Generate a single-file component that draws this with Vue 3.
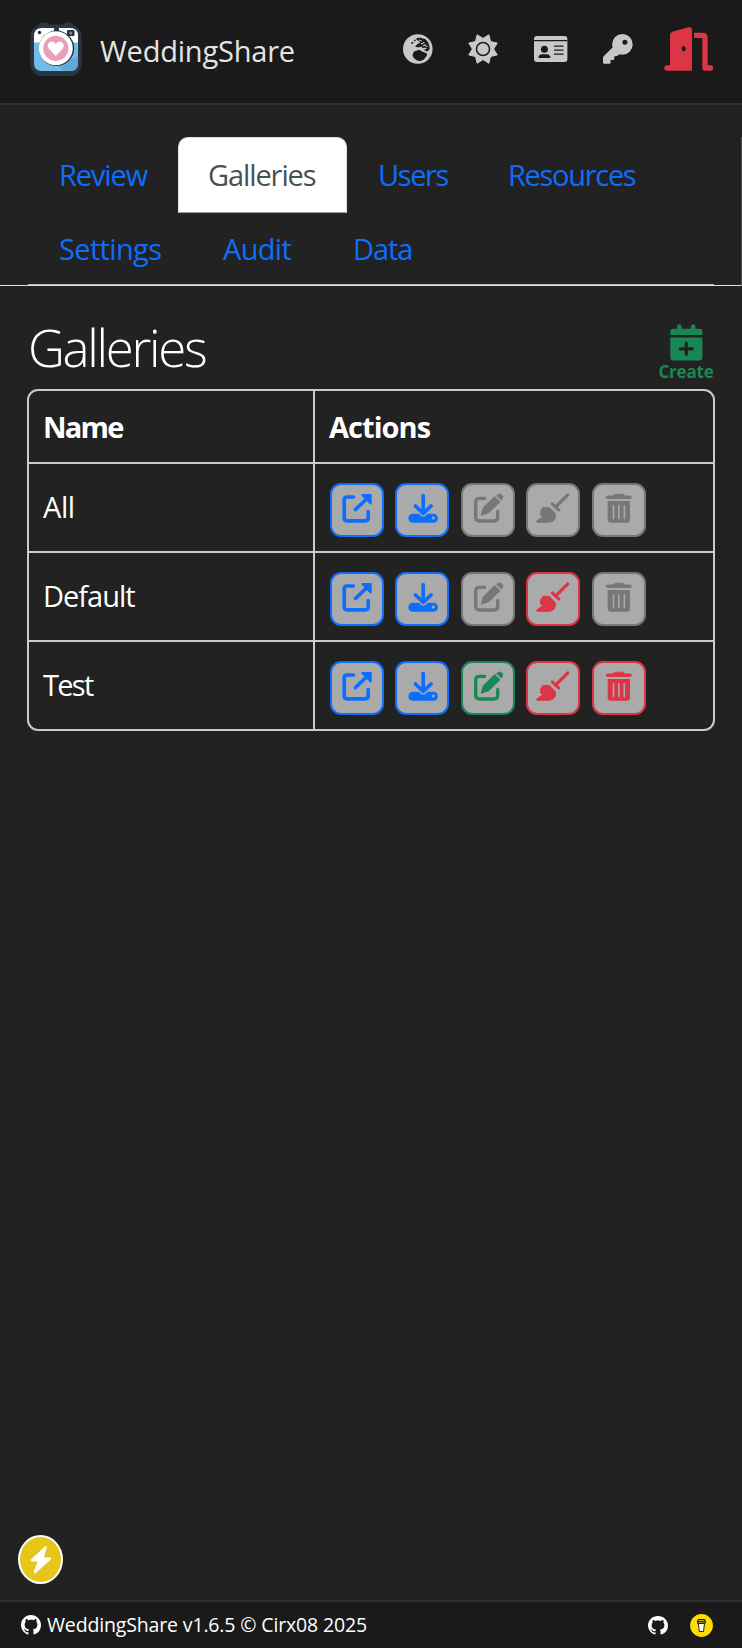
<script setup>
const tabs = [
  { label: 'Review', width: 150 },
  { label: 'Galleries', width: 169, active: true },
  { label: 'Users', width: 130 },
  { label: 'Resources', width: 190 },
  { label: 'Settings', width: 164 },
  { label: 'Audit', width: 130 },
  { label: 'Data', width: 122 }
]

const rows = [
  { name: 'All', actions: ['open blue', 'download blue', 'edit off', 'wipe off', 'remove off'] },
  { name: 'Default', actions: ['open blue', 'download blue', 'edit off', 'wipe red', 'remove off'] },
  { name: 'Test', actions: ['open blue', 'download blue', 'edit green', 'wipe red', 'remove red'] }
]

const github = 'M8 0C3.58 0 0 3.58 0 8c0 3.54 2.29 6.53 5.47 7.59.4.07.55-.17.55-.38 0-.19-.01-.82-.01-1.49-2.01.37-2.53-.49-2.69-.94-.09-.23-.48-.94-.82-1.13-.28-.15-.68-.52-.01-.53.63-.01 1.08.58 1.23.82.72 1.21 1.87.87 2.33.66.07-.52.28-.87.51-1.07-1.78-.2-3.64-.89-3.64-3.95 0-.87.31-1.59.82-2.15-.08-.2-.36-1.02.08-2.12 0 0 .67-.21 2.2.82.64-.18 1.32-.27 2-.27.68 0 1.36.09 2 .27 1.53-1.04 2.2-.82 2.2-.82.44 1.1.16 1.92.08 2.12.51.56.82 1.27.82 2.15 0 3.07-1.87 3.75-3.65 3.95.29.25.54.73.54 1.48 0 1.07-.01 1.93-.01 2.2 0 .21.15.46.55.38A8.013 8.013 0 0016 8c0-4.42-3.58-8-8-8z'

// Alternating outer and inner vertices of the eight-pointed sun
const sun = Array.from({ length: 16 }, (_, i) => {
  const r = i % 2 ? 10.6 : 15.4
  const a = ((i * 22.5 + 22.5) * Math.PI) / 180
  return `${(15 + r * Math.cos(a)).toFixed(2)},${(15 + r * Math.sin(a)).toFixed(2)}`
}).join(' ')
</script>

<template>
  <div class="page">
    <header class="topbar">
      <svg class="logo" width="52" height="55" viewBox="0 0 52 55">
        <rect x="9" y="0.5" width="10" height="8" rx="3" fill="#2b3543" />
        <rect x="34" y="0.5" width="9" height="8" rx="3" fill="#2b3543" />
        <rect x="0.5" y="2.5" width="51" height="51.5" rx="12" fill="#2b3543" />
        <path d="M4 21V14Q4 6 12 6H40Q48 6 48 14V21Z" fill="#fff" />
        <path d="M4 20.500H48V41Q48 49 40 49H12Q4 49 4 41Z" fill="#70bce8" />
        <path d="M40 38Q36 44 29 45L34 49H40Q48 49 48 41V34Z" fill="#5fa9d6" />
        <circle cx="9.500" cy="10.500" r="1.700" fill="#242b38" />
        <rect x="37" y="8" width="7.500" height="6" rx="1" fill="#293342" />
        <circle cx="40.700" cy="11" r="1.500" fill="#7d8795" />
        <path d="M24 9V6.500Q26 4 29 6.500V9Z" fill="#293342" />
        <circle cx="26.500" cy="26.300" r="17.700" fill="#202b3a" />
        <circle cx="25.800" cy="26.300" r="17" fill="#fff" />
        <circle cx="25.800" cy="26.300" r="12.600" fill="#ea9fbd" />
        <path d="M25.800 34L19.500 27.500C14.500 21.500 22 16 25.800 22C29.500 16 37 21.500 32 27.500Z" fill="#fff" />
      </svg>
      <span class="brand">WeddingShare</span>
      <nav class="tools">
        <svg class="globe" width="30" height="30" viewBox="0 0 30 30">
          <circle cx="14.800" cy="15" r="14.800" fill="#c8c8c8" />
          <path d="M9.500 22L10.300 18.500Q12 16.200 14.500 16.600L16.500 15.800L19 17.600L23.500 19.200Q24.800 20.300 23.500 22.300L20.500 25.700Q15 28.500 11.500 24.800Z" fill="#1a1a1a" />
          <path d="M13 5.300L17 3.600L22.500 5.200Q27 9.500 26.500 15.500L24 17.500L20.500 15.700L23.800 15L22.500 13.500L20 14.300L18.200 12.600L15.500 13.500L12 12.600L14.300 10.300L17.500 8.200L15.500 7Z" fill="#1a1a1a" />
          <path d="M18 9.800L21.500 8.500M20 12L23 10.700M23 12.800L24.500 12M16 6L18.500 7" stroke="#c8c8c8" stroke-width="1.300" />
          <path d="M8.300 9.400L10.300 8.300M11.300 6.900L12.500 6M14 5L15 4" stroke="#1a1a1a" stroke-width="1.500" />
        </svg>
        <svg class="sun" width="30" height="30" viewBox="0 0 30 30">
          <polygon :points="sun" fill="#c8c8c8" stroke="#c8c8c8" stroke-width="1" stroke-linejoin="round" />
          <circle cx="15" cy="15" r="6.500" fill="#c8c8c8" stroke="#1a1a1a" stroke-width="1.500" />
        </svg>
        <svg class="card" width="34" height="26" viewBox="0 0 34 26">
          <rect width="33.400" height="26" rx="3" fill="#c8c8c8" />
          <path d="M0 4.700H33.400" stroke="#1a1a1a" stroke-width="1.300" />
          <circle cx="10.400" cy="13.300" r="3.500" fill="#1a1a1a" />
          <path d="M4.300 22Q4.700 18.300 8 18.300H13Q16 18.300 16.500 22Z" fill="#1a1a1a" />
          <path d="M20.500 10.200H29M20.500 14.200H29M20.500 18.200H29" stroke="#1a1a1a" stroke-width="1.300" stroke-linecap="round" />
        </svg>
        <svg class="key" width="30" height="30" viewBox="0 0 30 30">
          <circle cx="19.400" cy="10.400" r="10.300" fill="#c8c8c8" />
          <path d="M10 13L.7 22.200Q0 23 0 24V28.500Q0 29.800 1.300 29.800H6.500Q7.600 29.800 7.600 28.500V26H10.200Q11.300 26 11.300 24.800V22.300H13.500L18 19.500Z" fill="#c8c8c8" />
          <circle cx="21.900" cy="8.300" r="2.500" fill="#1a1a1a" />
        </svg>
        <svg class="door" width="50" height="44" viewBox="0 0 50 44">
          <path d="M6 38.300V8.500Q6 5.300 9 4.500L24.500.3Q28 0 28 3.500V43.700H3Q.3 43.700.3 41Q.3 38.300 3 38.300Z" fill="#dc3545" />
          <path d="M30 8.400H38.700Q41 8.400 41 10.700V41H46.500" fill="none" stroke="#dc3545" stroke-width="5.400" stroke-linejoin="round" />
          <circle cx="46.500" cy="41" r="2.700" fill="#dc3545" />
          <ellipse cx="19.700" cy="21.600" rx="2" ry="2.700" fill="#1a1a1a" />
        </svg>
      </nav>
    </header>

    <div class="tabstrip">
      <nav class="tabs">
        <a v-for="tab in tabs" :key="tab.label" class="tab" :class="[tab.label.toLowerCase(), { active: tab.active }]" :style="{ width: tab.width + 'px' }">{{ tab.label }}</a>
      </nav>
    </div>

    <main class="content">
      <div class="titlebar">
        <h1>Galleries</h1>
        <div class="create">
          <svg width="33" height="37" viewBox="0 0 33 37">
            <path d="M.3 11V8Q.3 4.700 3.500 4.700H29.200Q32.400 4.700 32.400 8V11Z" fill="#198754" />
            <path d="M.3 13.500H32.400V33Q32.400 36.500 29 36.500H3.700Q.3 36.500.3 33Z" fill="#198754" />
            <path d="M9.400 2.400V8M23.200 2.400V8" stroke="#198754" stroke-width="4.400" stroke-linecap="round" />
            <path d="M16.300 19.200V30.300M10.300 24.800H22.200" stroke="#222" stroke-width="3.200" stroke-linecap="round" />
          </svg>
          <span>Create</span>
        </div>
      </div>

      <div class="table">
        <div class="row head">
          <div class="cell name">Name</div>
          <div class="cell acts">Actions</div>
        </div>
        <div v-for="row in rows" :key="row.name" class="row">
          <div class="cell name" :class="row.name.toLowerCase()"><span>{{ row.name }}</span></div>
          <div class="cell actions">
            <button v-for="action in row.actions" :key="action" class="action" :class="action">
              <svg width="54" height="54" viewBox="0 0 54 54" fill="none" stroke="currentColor" stroke-linecap="round" stroke-linejoin="round">
                <g v-if="action.startsWith('open')" stroke-width="3.700">
                  <path d="M23.300 14H17Q14.200 14 14.200 17V34.800Q14.200 37.800 17.200 37.800H35.200Q38.200 37.800 38.200 34.800V28.700M25.500 26.500L37 15.500" />
                  <path d="M32.300 12L40.700 12V20.500Z" fill="currentColor" stroke-width="2" />
                </g>
                <g v-else-if="action.startsWith('download')" stroke-width="3.700">
                  <rect x="13.400" y="30.700" width="29.500" height="9" rx="4.300" fill="currentColor" stroke="none" />
                  <path d="M20.500 23L28.200 30.400L36 23" stroke="#aaa" stroke-width="6.600" />
                  <path d="M28.200 12.500V30M20.500 23L28.200 30.400L36 23" />
                  <circle cx="38.200" cy="35" r="1.500" fill="#aaa" stroke="none" />
                </g>
                <g v-else-if="action.startsWith('edit')" stroke-width="3.300">
                  <path d="M23.700 15.300H18.500Q14.700 15.300 14.700 19V34.300Q14.700 38 18.500 38H33Q36.700 38 36.700 34.300V28.500" />
                  <path d="M20.500 32L22.200 25.300L33.700 14L38.600 18.900L27.500 29.600Z" fill="currentColor" stroke-width="1.200" />
                  <path d="M36 12.300L37.300 11.400Q39.200 10.500 40.600 12Q42.300 13.700 41.300 15.400L40.400 16.700Z" fill="currentColor" stroke-width="1" />
                </g>
                <g v-else-if="action.startsWith('wipe')">
                  <path d="M41.800 11.900L29.800 23.800" stroke-width="3.300" />
                  <path d="M26.300 20.900L32.800 27" stroke-width="3" />
                  <path d="M16.500 25Q20 23.800 23.300 24.600L29.400 30.700Q30.300 39.300 22 39.300H11.200Q10 38.700 11.200 37.600Q15 35.800 17 32.800L14.400 32Q14 27.500 16.500 25Z" fill="currentColor" stroke-width="1" />
                </g>
                <g v-else>
                  <path d="M15.800 14.200H37.900" stroke-width="3.600" />
                  <path d="M21.500 13L23 11.200H30.800L32.300 13Z" fill="currentColor" stroke-width="1" />
                  <path d="M15.700 18H38V36.500Q38 39.800 34.800 39.800H19Q15.700 39.800 15.700 36.500Z" fill="currentColor" stroke="none" />
                  <path d="M21.500 22.800V35.600M26.900 22.800V35.600M32.300 22.800V35.600" stroke="#aaa" stroke-width="1.600" />
                </g>
              </svg>
            </button>
          </div>
        </div>
      </div>
    </main>

    <div class="bolt">
      <svg width="22" height="28" viewBox="0 0 22 28">
        <path d="M15.500 1.500L2 14.200H9.300L5 26L20 12.700H12.300Z" fill="#fff" stroke="#fff" stroke-width="2.400" stroke-linejoin="round" />
      </svg>
    </div>

    <footer class="footer">
      <svg width="20" height="20" viewBox="0 0 16 16"><path :d="github" fill="#fff" /></svg>
      <span class="version">WeddingShare v1.6.5 © Cirx08 2025</span>
      <svg class="repo" width="20" height="19" viewBox="0 0 16 16" preserveAspectRatio="none"><path :d="github" fill="#fff" /></svg>
      <svg class="coffee" width="23" height="23" viewBox="0 0 23 23">
        <circle cx="11.500" cy="11.500" r="11.400" fill="#ffdd00" />
        <path d="M8.300 9.500L9.300 17.500H13.500L14.500 9.500Z" fill="#fff" stroke="#222" stroke-width="1" />
        <path d="M8.500 5.500H14.500L15.300 7.300V9H7.500V7.300Z" fill="#ffdd00" stroke="#222" stroke-width="1.100" />
        <path d="M7.200 7.300H15.700" stroke="#222" stroke-width="1.100" />
      </svg>
    </footer>
  </div>
</template>

<style>
body {
  margin: 0;
  background: #222;
}
</style>

<style scoped>
.page {
  position: relative;
  display: flex;
  flex-direction: column;
  box-sizing: border-box;
  width: 742px;
  height: 1648px;
  overflow: hidden;
  background: #222;
  color: #fff;
  font-family: "Open Sans", "Noto Sans", sans-serif;
  font-size: 29px;
  line-height: 40px;
}
svg {
  display: block;
  flex: none;
}
.topbar {
  display: flex;
  align-items: center;
  box-sizing: border-box;
  height: 105px;
  padding: 0 28px 4px 30px;
  border-bottom: 2px solid #303030;
  background: #1a1a1a;
}
.brand {
  margin-left: 18px;
  padding-top: 3px;
  color: #e4e4e4;
  letter-spacing: -0.2px;
}
.tools {
  display: flex;
  align-items: center;
  margin-left: auto;
  padding-bottom: 2px;
}
.sun {
  margin-left: 35px;
}
.card {
  margin-left: 36px;
}
.key {
  margin-left: 35px;
}
.door {
  margin-left: 31px;
}
.tabstrip {
  box-sizing: border-box;
  height: 149px;
  margin-top: 32px;
  padding: 0 28px;
  border-right: 1px solid #505050;
  border-bottom: 1px solid #dee2e6;
}
.tabs {
  display: flex;
  flex-wrap: wrap;
  align-content: flex-start;
  box-sizing: border-box;
  width: 686px;
  height: 148px;
  border-bottom: 1px solid #b8babe;
}
.tab {
  box-sizing: border-box;
  height: 74px;
  padding-left: 31px;
  line-height: 76px;
  color: #0d6efd;
  letter-spacing: -1.1px;
  white-space: nowrap;
}
.tab.active {
  height: 76px;
  margin-bottom: -2px;
  padding-left: 29px;
  border: 1px solid #dee2e6;
  border-bottom-color: #999;
  border-radius: 10px 10px 0 0;
  background: #fff;
  color: #495057;
  line-height: 74px;
}
.users {
  letter-spacing: -1.4px;
}
.resources {
  letter-spacing: -1.3px;
}
.settings {
  letter-spacing: -0.65px;
}
.audit {
  letter-spacing: -0.7px;
}
.content {
  padding: 0 27px;
}
.titlebar {
  display: flex;
  justify-content: space-between;
  height: 103px;
}
h1 {
  margin: 25px 0 0 1px;
  font-size: 51px;
  font-weight: 300;
  line-height: 72px;
  letter-spacing: -2.3px;
}
.create {
  display: flex;
  flex-direction: column;
  align-items: center;
  width: 56px;
  margin-top: 38px;
  margin-right: 1px;
  color: #198754;
  font-size: 17px;
  font-weight: 700;
  line-height: 22px;
  letter-spacing: -0.2px;
}
.table {
  box-sizing: border-box;
  width: 688px;
  overflow: hidden;
  border: 2px solid #c8cbcf;
  border-radius: 11px;
}
.row {
  display: flex;
  box-sizing: border-box;
  height: 89px;
  border-top: 2px solid #c8cbcf;
}
.row.head {
  height: 71px;
  border-top: 0;
  font-weight: 700;
}
.cell {
  display: flex;
  align-items: center;
  box-sizing: border-box;
  padding-left: 15px;
}
.name {
  width: 286px;
  padding-bottom: 1px;
  padding-left: 14px;
  border-right: 2px solid #c8cbcf;
  letter-spacing: -0.4px;
}
.name.default {
  letter-spacing: -1px;
}
.name.test {
  letter-spacing: -1.7px;
}
.head .name,
.head .acts {
  padding-bottom: 0;
  padding-top: 1px;
}
.head .name {
  letter-spacing: -1.8px;
}
.head .acts {
  letter-spacing: -0.95px;
  padding-left: 14px;
}
.actions {
  align-items: flex-start;
  gap: 11.5px;
  padding-top: 19px;
  padding-left: 14.500px;
}
.action {
  box-sizing: border-box;
  width: 54px;
  height: 54px;
  padding: 0;
  border: 2px solid;
  border-radius: 11px;
  background: #aaa;
}
.action svg {
  margin: -2px;
}
.blue {
  color: #0d6efd;
}
.green {
  color: #198754;
}
.red {
  color: #dc3545;
}
.off {
  color: #777;
}
.bolt {
  position: absolute;
  left: 18px;
  top: 1535px;
  display: flex;
  align-items: center;
  justify-content: center;
  box-sizing: border-box;
  width: 45px;
  height: 49px;
  border: 2px solid #fff;
  border-radius: 50%;
  background: #e6c619;
}
.footer {
  display: flex;
  align-items: center;
  box-sizing: border-box;
  height: 48px;
  margin-top: auto;
  padding: 0 29px 0 21px;
  border-top: 2px solid #303030;
  background: #1a1a1a;
  font-size: 19.500px;
}
.version {
  margin-left: 6px;
  letter-spacing: -0.15px;
  white-space: nowrap;
}
.repo {
  margin-left: auto;
}
.coffee {
  margin-left: 22px;
}
</style>
